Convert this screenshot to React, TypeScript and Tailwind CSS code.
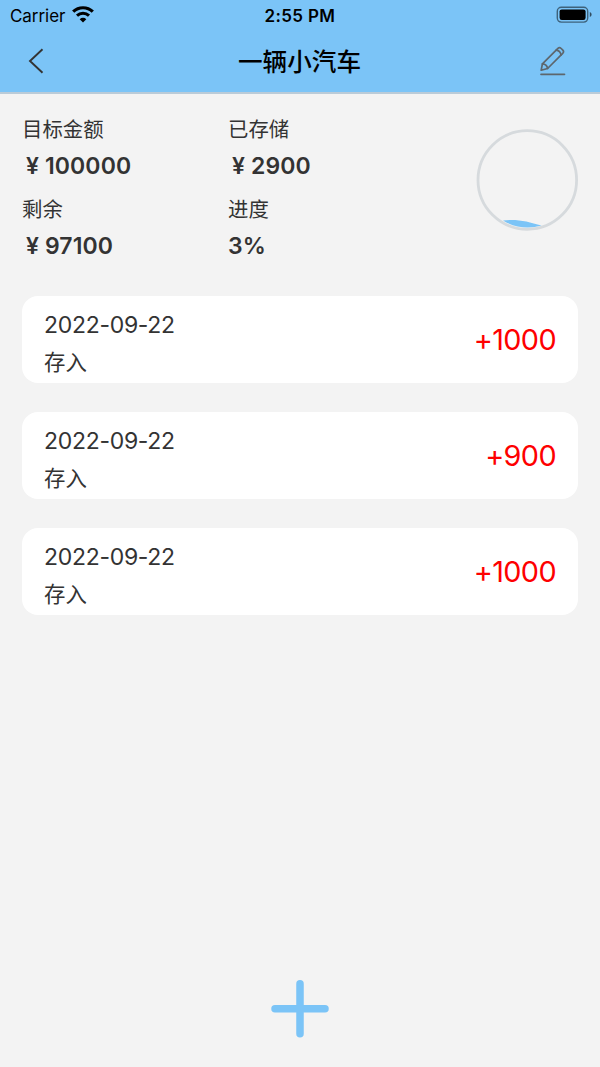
import React from "react";

const records = [
  { date: "2022-09-22", type: "存入", amount: "+1000" },
  { date: "2022-09-22", type: "存入", amount: "+900" },
  { date: "2022-09-22", type: "存入", amount: "+1000" },
];

function StatusBar() {
  return (
    <div className="grid h-[30px] grid-cols-3 items-start text-black">
      <div className="flex items-start pl-[10px]">
        <span className="w-[62px] text-[17px] leading-[32px] tracking-[-0.05px]">Carrier</span>
        <svg className="mt-[6px] h-[17px] w-[22px]" viewBox="0 0 22 17" fill="none" stroke="#000">
          <path d="M1.2 5.7C6.7 .4 15.3 .4 20.8 5.7" strokeWidth="3.2" />
          <path d="M5 9.6C8.4 6.4 13.6 6.4 17 9.6" strokeWidth="3" />
          <path d="M11 16.4L7.7 13.2C9.6 11.4 12.4 11.4 14.3 13.2Z" fill="#000" stroke="none" />
        </svg>
      </div>
      <span className="text-center text-[17px] font-semibold leading-[32px] tracking-[0.35px]">2:55 PM</span>
      <div className="flex justify-end pr-[8px] pt-[6px]">
        <svg className="h-[17px] w-[36px]" viewBox="0 0 36 17">
          <rect x="1.3" y="1.3" width="30.4" height="14.8" rx="4" fill="none" stroke="#000" strokeOpacity=".5" strokeWidth="1.4" />
          <rect x="3.6" y="3.4" width="26" height="10.6" rx="2.2" />
          <path d="M33.8 6C36.2 7 36.2 10 33.8 11Z" fillOpacity=".6" />
        </svg>
      </div>
    </div>
  );
}

function NavBar() {
  return (
    <div className="flex h-[62px] items-center justify-between pl-[28px] pr-[34px]">
      <svg className="h-[26px] w-[16px]" viewBox="0 0 16 26" fill="none" stroke="#333" strokeWidth="1.9">
        <path d="M14.5 1.3L2 13L14.5 24.7" />
      </svg>
      <h1 className="ml-[16px] pt-[2px] text-[24.6px] font-medium leading-[36px] text-black">一辆小汽车</h1>
      <svg className="h-[30px] w-[27px]" viewBox="0 0 27 30" fill="none" stroke="#5d666d" strokeWidth="1.7" strokeLinejoin="round" strokeLinecap="round">
        <path d="M2.2 24.2L3.4 17.8L18.9 2.3Q20.5 .9 22.2 2.5L23.8 4.1Q25.3 5.8 23.7 7.3L8.6 22.5Z" />
        <path d="M3.4 17.8Q7.8 18 8.6 22.5M17.2 4.1Q21.4 4.7 22 9" />
        <path d="M2 28.3H25.5" />
      </svg>
    </div>
  );
}

function Stat({ label, value, money = false }: { label: string; value: string; money?: boolean }) {
  return (
    <div className="h-[80px] text-[#333]">
      <div className="h-[36px] pt-px text-[20.4px] leading-[32px]">{label}</div>
      <div className="flex text-[23px] font-semibold leading-[34px]">
        {money && <span className="w-[23px] pl-[4px]">¥</span>}
        <span className="whitespace-nowrap tracking-[0.1px]">{value}</span>
      </div>
    </div>
  );
}

export default function App() {
  return (
    <div className="flex h-[1067px] w-[600px] flex-col bg-[#f3f3f3] font-['Inter','Noto_Sans_CJK_SC',sans-serif]">
      <header className="h-[94px] border-b-2 border-[#bacbd8] bg-[#7bc4f7]">
        <StatusBar />
        <NavBar />
      </header>
      <section className="flex h-[202px] justify-between pl-[22px] pr-[22px] pt-[19px]">
        <div className="grid grid-cols-[206px_200px] content-start">
          <Stat label="目标金额" value="100000" money />
          <Stat label="已存储" value="2900" money />
          <Stat label="剩余" value="97100" money />
          <Stat label="进度" value="3%" />
        </div>
        <svg className="mt-[16px] h-[102px] w-[102px]" viewBox="0 0 102 102">
          <circle cx="51.3" cy="51" r="49.3" fill="none" stroke="#d6dadd" strokeWidth="2.8" />
          <path d="M27 91.4C42 89.8 52 92.6 65.5 96.6C53 100.2 39 99.2 27 91.4Z" fill="#7bc4f7" />
        </svg>
      </section>
      <main className="flex flex-1 flex-col gap-[29px] px-[22px]">
        {records.map((record, index) => (
          <article key={index} className="flex h-[87px] items-center justify-between rounded-[16px] bg-white px-[22px]">
            <div className="pt-[8px] text-[#333]">
              <div className="h-[37px] text-[23px] leading-[36px] tracking-[-0.3px]">{record.date}</div>
              <div className="text-[21.4px] leading-[36px]">{record.type}</div>
            </div>
            <span className="text-[28.8px] tracking-[-0.6px] text-[#fe0000]">{record.amount}</span>
          </article>
        ))}
      </main>
      <footer className="flex h-[88px] justify-center">
        <svg className="h-[60px] w-[60px]" viewBox="0 0 60 60" fill="none" stroke="#7bc4f7" strokeWidth="7.5" strokeLinecap="round">
          <path d="M30 4.7V54.7M5 29.7H55" />
        </svg>
      </footer>
    </div>
  );
}
